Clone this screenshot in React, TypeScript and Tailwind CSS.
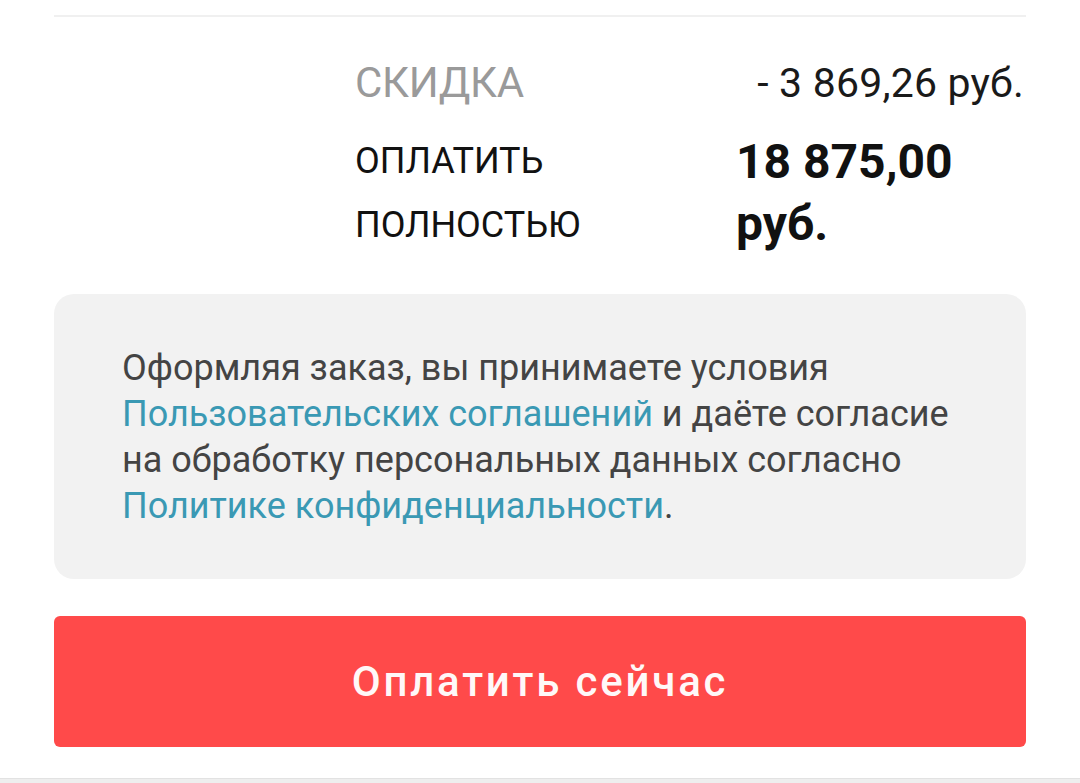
export default function App() {
  return (
    <main
      className="w-[1080px] h-[783px] bg-white flex flex-col overflow-hidden"
      style={{ fontFamily: "Roboto, 'Noto Sans', sans-serif" }}
    >
      <div className="px-[54px] flex flex-col flex-1">
        <div className="mt-[15px] h-[2px] bg-[#f0f0f0]" />

        <div className="pl-[301px] mt-[41px] grid grid-cols-[383px_1fr] items-start">
          <div className="text-[42px] leading-[50px] text-[#9a9a9a] tracking-[-0.3px]">СКИДКА</div>
          <div className="text-[41px] leading-[50px] text-[#1a1a1a] text-right pr-[2px] tracking-[0.2px]">
            - 3 869,26 руб.
          </div>

          <div className="mt-[21px] text-[36px] leading-[64px] text-[#111]">
            ОПЛАТИТЬ
            <br />
            ПОЛНОСТЬЮ
          </div>
          <div className="mt-[23px] text-[48px] leading-[62px] font-bold text-[#111] -ml-[2px]">
            18 875,00
            <br />
            руб.
          </div>
        </div>

        <div className="mt-[37px] h-[285px] rounded-[20px] bg-[#f2f2f2] px-[68px] flex items-center">
          <p className="text-[36px] leading-[46px] text-[#444444]">
            Оформляя заказ, вы принимаете условия{" "}
            <a className="text-[#3a99b4]">Пользовательских соглашений</a> и даёте
            согласие на обработку персональных данных согласно{" "}
            <a className="text-[#3a99b4]">Политике конфиденциальности</a>.
          </p>
        </div>

        <button className="mt-[37px] h-[131px] rounded-[6px] bg-[#ff4a4a] text-[#fff8f8] text-[42px] font-medium tracking-[2.8px] flex items-center justify-center">
          Оплатить сейчас
        </button>
      </div>

      <div className="h-[5px] bg-[#eeeeee] border-t border-[#e2e2e2]" />
    </main>
  );
}
